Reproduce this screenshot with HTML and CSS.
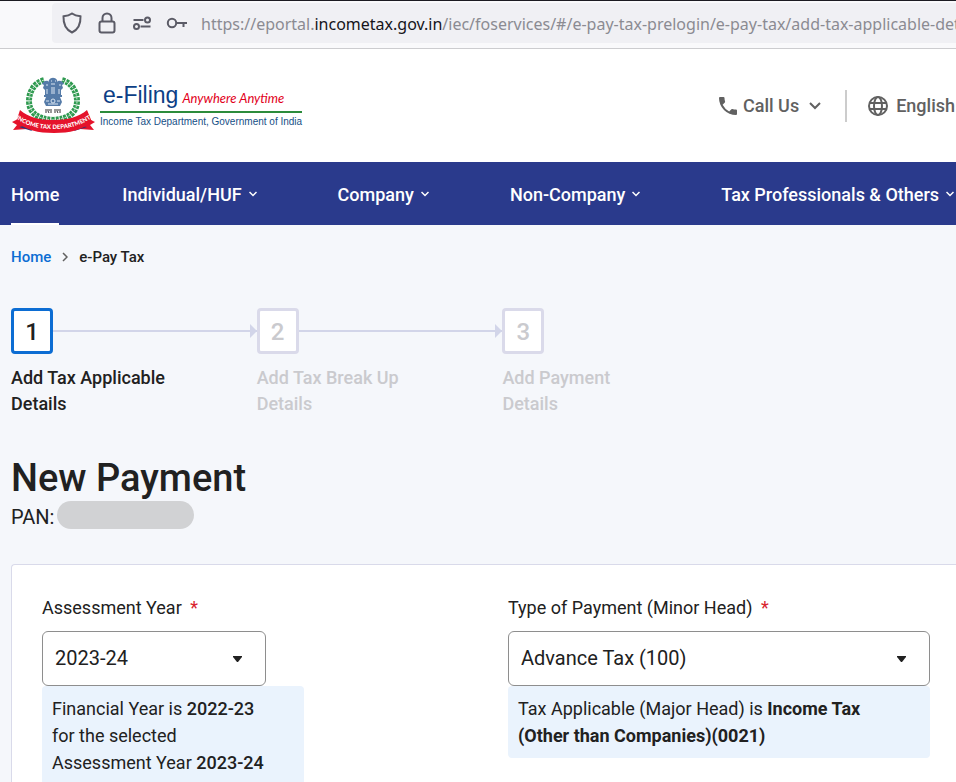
FILE: index.html
```
<!DOCTYPE html>
<html lang="en">
  <head>
    <meta charset="UTF-8" />
    <meta name="viewport" content="width=device-width, initial-scale=1.0" />
    <title>e-Pay Tax</title>
    <link rel="stylesheet" href="styles.css">
  </head>
  <body>
    <div class="browser-bar">
      <div class="address">
        <svg class="address-icon" viewBox="0 0 22 22">
          <path d="M11 1.500C8.500 3.300 5.600 4 2.500 4.300 2.200 11.500 4.500 17.500 11 20.500 17.500 17.500 19.800 11.500 19.500 4.300 16.400 4 13.500 3.300 11 1.500z" />
        </svg>
        <svg class="address-icon" viewBox="0 0 22 22">
          <rect x="3.500" y="9.500" width="15" height="11" rx="2" />
          <path d="M6.500 9.500V6a4.500 4.500 0 0 1 9 0v3.500" />
        </svg>
        <svg class="address-icon" viewBox="0 0 22 22">
          <path d="M2.500 8h10M9.500 14.500h10" />
          <circle cx="16.500" cy="8" r="2.500" />
          <circle cx="5.500" cy="14.500" r="2.500" />
        </svg>
        <svg class="address-icon" viewBox="0 0 22 22">
          <circle cx="6" cy="11" r="4.200" />
          <path d="M10.200 11H21M17.500 11v4" />
        </svg>
        <a class="address-url" href="#">https://eportal.<span>incometax.gov.in</span>/iec/foservices/#/e-pay-tax-prelogin/e-pay-tax/add-tax-applicable-details</a>
      </div>
    </div>

    <header class="header">
      <a class="logo" href="#">
        <svg class="emblem" viewBox="0 0 84 60">
          <!-- laurel wreath -->
          <path class="wreath" d="M32 4C22 7 17 16 17 25c0 11 8 18 24 19" />
          <path class="wreath" d="M50 4c10 3 15 12 15 21 0 11-8 18-24 19" />
          <path class="wreath-gap" d="M32 4C22 7 17 16 17 25c0 11 8 18 24 19" />
          <path class="wreath-gap" d="M50 4c10 3 15 12 15 21 0 11-8 18-24 19" />
          <!-- lion capital -->
          <g class="lions">
            <path d="M37 4c2-3 6-3 8 0l1 3-2 4h-6l-2-4z" />
            <path d="M36 5c-3-1-5 1-6 3l2 1-1 3 2 2v5h5V8zM46 5c3-1 5 1 6 3l-2 1 1 3-2 2v5h-5V8z" />
            <path d="M37 10h8v9h-8zM32 19h18v2H32zM34 21h14l2 5-2 4H34l-2-4z" />
          </g>
          <path class="lions-detail" d="M39 5h1M43 5h1M39 8h4M34 9h2M47 9h2M40 11v7M42 11v7M35 13v5M47 13v5M39 25a2 2 0 1 0 4 0 2 2 0 1 0-4 0M34 25h3M45 25h3M36 28h10" />
          <path class="motto" d="M33 34h7M42 34h7M34 35v2M36 35l1 2M39 35v2M43 35v2M45 35l1 2M48 35v2" />
          <!-- ribbon -->
          <path class="ribbon" d="M8 42L0 46l5 3-4 5 14-1zM75 42l8 4-5 3 4 5-14-1z" />
          <path class="ribbon-fold" d="M7 51l10-2 3 6zM75 51l-10-2-3 6z" />
          <path class="ribbon" d="M8 34c8 7 19 10 33 10s26-3 34-10l5 12c-10 8-22 11-38 11S14 54 4 46z" />
          <path id="ribbon-line" fill="none" d="M2 41c12 9 24 12 39 12s28-3 40-12" />
          <text class="ribbon-text"><textPath href="#ribbon-line" startOffset="50%">INCOME TAX DEPARTMENT</textPath></text>
        </svg>
        <span class="logo-text">
          <span class="logo-top"><span class="logo-name">e-Filing</span><em>Anywhere Anytime</em></span>
          <span class="logo-dept">Income Tax Department, Government of India</span>
        </span>
      </a>
      <div class="header-links">
        <button class="header-btn call">
          <svg class="icon-phone" viewBox="0 0 18 18"><path d="M3.620 7.790a15 15 0 0 0 6.590 6.590l2.200-2.200a1 1 0 0 1 1.020-.240 11.400 11.400 0 0 0 3.570.570 1 1 0 0 1 1 1V17a1 1 0 0 1-1 1A17 17 0 0 1 0 1a1 1 0 0 1 1-1h3.500a1 1 0 0 1 1 1c0 1.250.200 2.450.570 3.570a1 1 0 0 1-.250 1.020z" /></svg>
          Call Us
          <svg class="icon-down" viewBox="0 0 12 8"><path d="M1 1l5 5 5-5" /></svg>
        </button>
        <button class="header-btn language">
          <svg class="icon-globe" viewBox="0 0 20 20">
            <circle cx="10" cy="10" r="9" />
            <ellipse cx="10" cy="10" rx="4" ry="9" />
            <path d="M2 7h16M2 13h16" />
          </svg>
          English
        </button>
      </div>
    </header>

    <nav class="main-nav">
      <a class="active" href="#">Home</a>
      <a class="has-menu" href="#">Individual/HUF <svg viewBox="0 0 8 6"><path d="M.5 1L4 4.500 7.500 1" /></svg></a>
      <a class="has-menu" href="#">Company <svg viewBox="0 0 8 6"><path d="M.5 1L4 4.500 7.500 1" /></svg></a>
      <a class="has-menu" href="#">Non-Company <svg viewBox="0 0 8 6"><path d="M.5 1L4 4.500 7.500 1" /></svg></a>
      <a class="has-menu" href="#">Tax Professionals &amp; Others <svg viewBox="0 0 8 6"><path d="M.5 1L4 4.500 7.500 1" /></svg></a>
    </nav>

    <main class="content">
      <div class="breadcrumb">
        <a href="#">Home</a>
        <svg viewBox="0 0 6 10"><path d="M1 1l4 4-4 4" /></svg>
        <span>e-Pay Tax</span>
      </div>

      <ol class="steps">
        <li class="step current">
          <div class="step-track"><span class="step-number">1</span><span class="step-line"></span></div>
          <p>Add Tax Applicable Details</p>
        </li>
        <li class="step">
          <div class="step-track"><span class="step-number">2</span><span class="step-line"></span></div>
          <p>Add Tax Break Up Details</p>
        </li>
        <li class="step">
          <div class="step-track"><span class="step-number">3</span></div>
          <p>Add Payment Details</p>
        </li>
      </ol>

      <h1>New Payment</h1>
      <div class="pan">PAN: <span class="pan-hidden"></span></div>

      <form class="card">
        <div class="field year">
          <label for="year">Assessment Year <span class="required">*</span></label>
          <div class="select-box">
            <select id="year">
              <option>2023-24</option>
              <option>2022-23</option>
            </select>
            <svg viewBox="0 0 9 6"><path d="M0 0h9v1L5 6H4L0 1z" /></svg>
          </div>
          <div class="info">Financial Year is <b>2022-23</b> for the selected Assessment Year <b>2023-24</b></div>
        </div>
        <div class="field">
          <label for="type">Type of Payment (Minor Head) <span class="required">*</span></label>
          <div class="select-box">
            <select id="type">
              <option>Advance Tax (100)</option>
            </select>
            <svg viewBox="0 0 9 6"><path d="M0 0h9v1L5 6H4L0 1z" /></svg>
          </div>
          <div class="info major">Tax Applicable (Major Head) is <b>Income Tax (Other than Companies)(0021)</b></div>
        </div>
      </form>
    </main>
  </body>
</html>
```
FILE: styles.css
```
* {
  box-sizing: border-box;
}
body {
  margin: 0;
  font-family: Roboto, "Liberation Sans", sans-serif;
  font-size: 18px;
  color: #212121;
  background-color: #f5f7fb;
  overflow-x: hidden;
}
a {
  text-decoration: none;
}
svg {
  flex: none;
}

/* Browser bar */
.browser-bar {
  height: 49px;
  padding: 2px 0 5px 52px;
  background-color: #f9f9fb;
  border-top: 1px solid #1c1b22;
  border-bottom: 1px solid #cccccf;
}
.address {
  display: flex;
  align-items: center;
  gap: 13px;
  height: 40px;
  padding-left: 9px;
  background-color: #f0f0f4;
  border-radius: 4px 0 0 4px;
  overflow: hidden;
}
.address-icon {
  width: 22px;
  height: 22px;
  fill: none;
  stroke: #5b5b66;
  stroke-width: 2;
}
.address-url {
  padding-top: 2px;
  font-family: "Noto Sans", "Open Sans", sans-serif;
  font-size: 16px;
  white-space: nowrap;
  color: #8b8b92;
}
.address-url span {
  color: #15141a;
}

/* Header */
.header {
  display: flex;
  justify-content: space-between;
  align-items: center;
  height: 113px;
  padding-left: 12px;
  background-color: white;
}
.logo {
  display: flex;
  align-items: center;
  gap: 4px;
}
.emblem {
  width: 84px;
  height: 60px;
}
.wreath {
  fill: none;
  stroke: #2f9a50;
  stroke-width: 6;
  stroke-dasharray: 3 1;
}
.wreath-gap {
  fill: none;
  stroke: #c5e5cc;
  stroke-width: 1;
  stroke-dasharray: 2 2;
}
.lions {
  fill: #557ba8;
}
.lions-detail {
  fill: none;
  stroke: #dbe6f2;
  stroke-width: 1;
}
.motto {
  fill: none;
  stroke: #333;
  stroke-width: 1;
}
.ribbon {
  fill: #e5132b;
}
.ribbon-fold {
  fill: #213a7c;
}
.ribbon-text {
  font-family: Lato, "Liberation Sans", sans-serif;
  font-size: 6px;
  font-weight: 900;
  fill: white;
  text-anchor: middle;
}
.logo-text {
  display: flex;
  flex-direction: column;
}
.logo-top {
  display: flex;
  align-items: baseline;
  gap: 4px;
  padding: 2px 3px 0;
  line-height: 25px;
  border-bottom: 2px solid #2c8c3c;
}
.logo-name {
  font-family: "Liberation Sans", Arial, sans-serif;
  font-size: 23px;
  color: #0d3f86;
}
.logo-top em {
  font-family: Lato, "Liberation Sans", sans-serif;
  font-size: 13px;
  color: #e2001a;
}
.logo-dept {
  font-family: "Liberation Sans", Arial, sans-serif;
  font-size: 10px;
  line-height: 18px;
  white-space: nowrap;
  color: #164f86;
}
.header-links {
  display: flex;
  align-items: center;
}
.header-btn {
  display: flex;
  align-items: center;
  height: 32px;
  padding: 0;
  border: none;
  background: none;
  font-family: inherit;
  font-size: 18px;
  font-weight: 500;
  color: #616161;
  cursor: pointer;
}
.call {
  gap: 6px;
  padding-right: 24px;
  border-right: 2px solid #ccc;
}
.language {
  gap: 8px;
  padding: 0 1px 0 21px;
}
.icon-phone {
  width: 18px;
  height: 18px;
  fill: #616161;
}
.icon-down {
  width: 12px;
  height: 8px;
  margin-left: 4px;
  fill: none;
  stroke: #616161;
  stroke-width: 2;
}
.icon-globe {
  width: 20px;
  height: 20px;
  fill: none;
  stroke: #616161;
  stroke-width: 2;
}

/* Navigation */
.main-nav {
  display: flex;
  gap: 63px;
  height: 63px;
  padding-left: 11px;
  background-color: #2a3a8c;
}
.main-nav a {
  display: flex;
  align-items: center;
  gap: 7px;
  padding-top: 3px;
  border-bottom: 2px solid transparent;
  font-weight: 500;
  white-space: nowrap;
  color: white;
}
.main-nav .active {
  border-bottom-color: white;
}
.main-nav .has-menu {
  padding-right: 18px;
}
.main-nav .has-menu:last-child {
  padding-right: 0;
}
.main-nav svg {
  width: 8px;
  height: 6px;
  fill: none;
  stroke: white;
  stroke-width: 1.5;
}

/* Content */
.content {
  padding-left: 11px;
}
.breadcrumb {
  display: flex;
  align-items: center;
  gap: 11px;
  padding-top: 20px;
  font-size: 15px;
  font-weight: 500;
  line-height: 24px;
}
.breadcrumb a {
  color: #0c6dd3;
}
.breadcrumb svg {
  width: 6px;
  height: 10px;
  fill: none;
  stroke: #616161;
  stroke-width: 1.5;
}
.steps {
  display: flex;
  margin: 39px 0 0;
  padding: 0;
  list-style: none;
}
.step {
  flex: 0 0 26%;
  font-weight: 500;
  color: #cacace;
}
.step-track {
  display: flex;
  align-items: center;
}
.step-number {
  width: 42px;
  height: 46px;
  border: 3px solid #dadaea;
  border-radius: 4px;
  background-color: white;
  font-size: 24px;
  line-height: 42px;
  text-align: center;
}
.step-line {
  position: relative;
  flex: 1;
  height: 2px;
  background-color: #d2d5e9;
}
.step-line::after {
  content: "";
  position: absolute;
  right: 0;
  top: -6px;
  border: 7px solid transparent;
  border-left-color: #d2d5e9;
  border-right-width: 0;
}
.step p {
  max-width: 160px;
  margin: 11px 0 0;
  line-height: 26px;
}
.current {
  color: #212121;
}
.current .step-number {
  border-color: #0c6dd3;
}
h1 {
  margin: 38px 0 0;
  font-size: 38px;
  font-weight: 500;
  line-height: 46px;
}
.pan {
  display: flex;
  align-items: flex-start;
  gap: 3px;
  font-size: 20px;
  line-height: 32px;
}
.pan-hidden {
  width: 137px;
  height: 28px;
  border-radius: 14px;
  background-color: #d1d2d4;
}

/* Form */
.card {
  display: grid;
  grid-template-columns: 1fr 1fr;
  gap: 44px;
  margin-top: 31px;
  padding: 30px 26px 30px 30px;
  background-color: white;
  border: 1px solid #d9daea;
  border-right: none;
  border-radius: 4px 0 0 0;
}
.field label {
  display: block;
  margin-bottom: 10px;
  line-height: 26px;
}
.required {
  margin-left: 4px;
  color: #d9232e;
}
.select-box {
  position: relative;
}
.select-box select {
  width: 100%;
  height: 55px;
  padding: 0 12px 2px;
  appearance: none;
  border: 1px solid #8e8e8e;
  border-radius: 6px;
  background-color: white;
  font-family: inherit;
  font-size: 20px;
  color: #212121;
}
.select-box svg {
  position: absolute;
  right: 24px;
  top: 25px;
  width: 9px;
  height: 6px;
  fill: #212121;
  pointer-events: none;
}
.info {
  padding: 9px 30px 9px 10px;
  border-radius: 4px;
  background-color: #eaf3fd;
  line-height: 27px;
}
.info b {
  font-weight: 500;
}
.major b {
  font-weight: 700;
}
.year .select-box {
  width: 53%;
}
.year .info {
  width: 62%;
}
```
